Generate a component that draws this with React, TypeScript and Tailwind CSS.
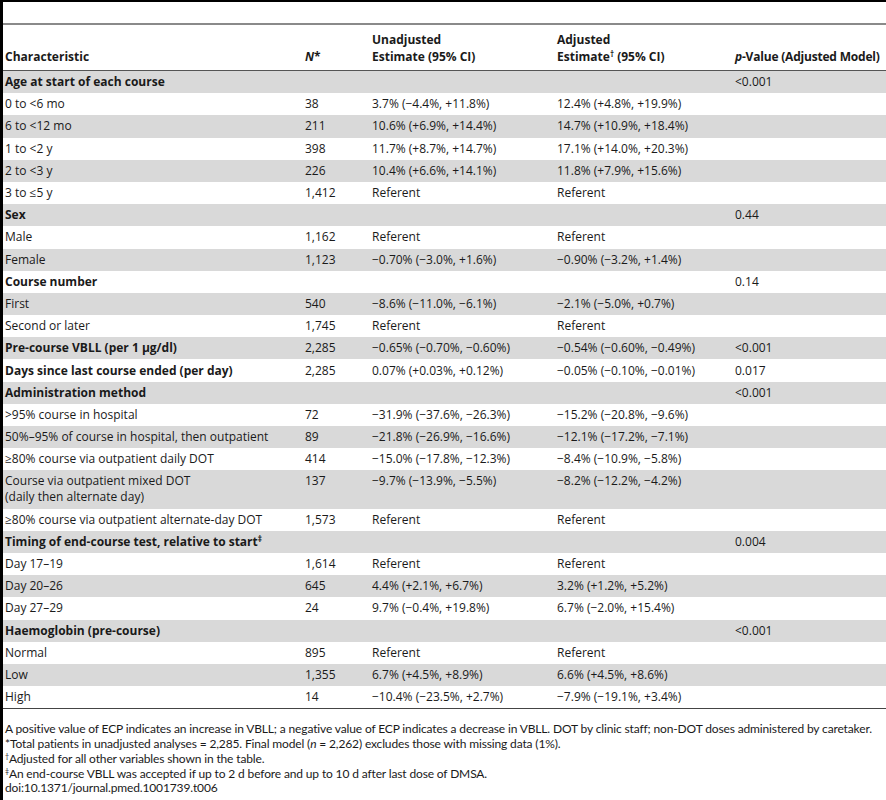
import React from 'react';

type Row = {
  label: React.ReactNode;
  n?: string;
  unadj?: string;
  adj?: string;
  p?: string;
  group?: boolean;
};

const rows: Row[] = [
  { label: 'Age at start of each course', group: true, p: '<0.001' },
  { label: '0 to <6 mo', n: '38', unadj: '3.7% (−4.4%, +11.8%)', adj: '12.4% (+4.8%, +19.9%)' },
  { label: '6 to <12 mo', n: '211', unadj: '10.6% (+6.9%, +14.4%)', adj: '14.7% (+10.9%, +18.4%)' },
  { label: '1 to <2 y', n: '398', unadj: '11.7% (+8.7%, +14.7%)', adj: '17.1% (+14.0%, +20.3%)' },
  { label: '2 to <3 y', n: '226', unadj: '10.4% (+6.6%, +14.1%)', adj: '11.8% (+7.9%, +15.6%)' },
  { label: '3 to ≤5 y', n: '1,412', unadj: 'Referent', adj: 'Referent' },
  { label: 'Sex', group: true, p: '0.44' },
  { label: 'Male', n: '1,162', unadj: 'Referent', adj: 'Referent' },
  { label: 'Female', n: '1,123', unadj: '−0.70% (−3.0%, +1.6%)', adj: '−0.90% (−3.2%, +1.4%)' },
  { label: 'Course number', group: true, p: '0.14' },
  { label: 'First', n: '540', unadj: '−8.6% (−11.0%, −6.1%)', adj: '−2.1% (−5.0%, +0.7%)' },
  { label: 'Second or later', n: '1,745', unadj: 'Referent', adj: 'Referent' },
  { label: 'Pre-course VBLL (per 1 μg/dl)', group: true, n: '2,285', unadj: '−0.65% (−0.70%, −0.60%)', adj: '−0.54% (−0.60%, −0.49%)', p: '<0.001' },
  { label: 'Days since last course ended (per day)', group: true, n: '2,285', unadj: '0.07% (+0.03%, +0.12%)', adj: '−0.05% (−0.10%, −0.01%)', p: '0.017' },
  { label: 'Administration method', group: true, p: '<0.001' },
  { label: '>95% course in hospital', n: '72', unadj: '−31.9% (−37.6%, −26.3%)', adj: '−15.2% (−20.8%, −9.6%)' },
  { label: '50%–95% of course in hospital, then outpatient', n: '89', unadj: '−21.8% (−26.9%, −16.6%)', adj: '−12.1% (−17.2%, −7.1%)' },
  { label: '≥80% course via outpatient daily DOT', n: '414', unadj: '−15.0% (−17.8%, −12.3%)', adj: '−8.4% (−10.9%, −5.8%)' },
  {
    label: (
      <>
        Course via outpatient mixed DOT
        <br />
        (daily then alternate day)
      </>
    ),
    n: '137',
    unadj: '−9.7% (−13.9%, −5.5%)',
    adj: '−8.2% (−12.2%, −4.2%)',
  },
  { label: '≥80% course via outpatient alternate-day DOT', n: '1,573', unadj: 'Referent', adj: 'Referent' },
  {
    label: (
      <>
        Timing of end-course test, relative to start<sup className="text-[8px]">‡</sup>
      </>
    ),
    group: true,
    p: '0.004',
  },
  { label: 'Day 17–19', n: '1,614', unadj: 'Referent', adj: 'Referent' },
  { label: 'Day 20–26', n: '645', unadj: '4.4% (+2.1%, +6.7%)', adj: '3.2% (+1.2%, +5.2%)' },
  { label: 'Day 27–29', n: '24', unadj: '9.7% (−0.4%, +19.8%)', adj: '6.7% (−2.0%, +15.4%)' },
  { label: 'Haemoglobin (pre-course)', group: true, p: '<0.001' },
  { label: 'Normal', n: '895', unadj: 'Referent', adj: 'Referent' },
  { label: 'Low', n: '1,355', unadj: '6.7% (+4.5%, +8.9%)', adj: '6.6% (+4.5%, +8.6%)' },
  { label: 'High', n: '14', unadj: '−10.4% (−23.5%, +2.7%)', adj: '−7.9% (−19.1%, +3.4%)' },
];

export default function App() {
  return (
    <div className="w-[886px] h-[800px] overflow-hidden bg-white border-l-[3px] border-black text-[#1a1a1a] font-['Open_Sans',sans-serif]">
      <div className="h-[23px] border-t-2 border-black" />
      <table className="w-[883px] table-fixed border-collapse text-[12px] leading-[16px]">
        <colgroup>
          <col className="w-[300px]" />
          <col className="w-[67px]" />
          <col className="w-[185px]" />
          <col className="w-[178px]" />
          <col className="w-[153px]" />
        </colgroup>
        <thead>
          <tr className="border-t-2 border-b border-t-[#8a8a8a] border-b-[#555] align-bottom font-bold leading-[17px]">
            <th className="pl-[2px] pt-[6px] pb-[5px] text-left">Characteristic</th>
            <th className="pl-[2px] pt-[6px] pb-[5px] text-left">
              <i>N</i>*
            </th>
            <th className="pl-[2px] pt-[6px] pb-[5px] text-left">
              Unadjusted
              <br />
              Estimate (95% CI)
            </th>
            <th className="pl-[2px] pt-[6px] pb-[5px] text-left">
              Adjusted
              <br />
              Estimate<sup className="text-[8px]">†</sup> (95% CI)
            </th>
            <th className="pl-[2px] pt-[6px] pb-[5px] text-left whitespace-nowrap tracking-[-0.2px]">
              <i>p</i>-Value (Adjusted Model)
            </th>
          </tr>
        </thead>
        <tbody>
          {rows.map((r, i) => (
            <tr
              key={i}
              className={`${i % 2 === 0 ? 'bg-[#d9d9d9]' : 'bg-white'} ${i === rows.length - 1 ? 'border-b border-[#444]' : ''} align-top`}
            >
              <td className={`pl-[2px] py-[3.1px] ${r.group ? 'font-bold' : ''}`}>{r.label}</td>
              <td className="pl-[2px] py-[3.1px]">{r.n}</td>
              <td className="pl-[2px] py-[3.1px] whitespace-nowrap">{r.unadj}</td>
              <td className="pl-[2px] py-[3.1px] whitespace-nowrap">{r.adj}</td>
              <td className="pl-[2px] py-[3.1px]">{r.p}</td>
            </tr>
          ))}
        </tbody>
      </table>
      <div className="pl-[2px] pt-[13px] font-['Lato',sans-serif] text-[12px] leading-[14.8px] tracking-[-0.14px] whitespace-nowrap">
        <p>
          A positive value of ECP indicates an increase in VBLL; a negative value of ECP indicates a decrease in VBLL. DOT by clinic staff; non-DOT doses administered by caretaker.
        </p>
        <p>
          *Total patients in unadjusted analyses = 2,285. Final model (<i>n</i> = 2,262) excludes those with missing data (1%).
        </p>
        <p>
          <sup className="text-[7px]">†</sup>Adjusted for all other variables shown in the table.
        </p>
        <p>
          <sup className="text-[7px]">‡</sup>An end-course VBLL was accepted if up to 2 d before and up to 10 d after last dose of DMSA.
        </p>
        <p>doi:10.1371/journal.pmed.1001739.t006</p>
      </div>
    </div>
  );
}
